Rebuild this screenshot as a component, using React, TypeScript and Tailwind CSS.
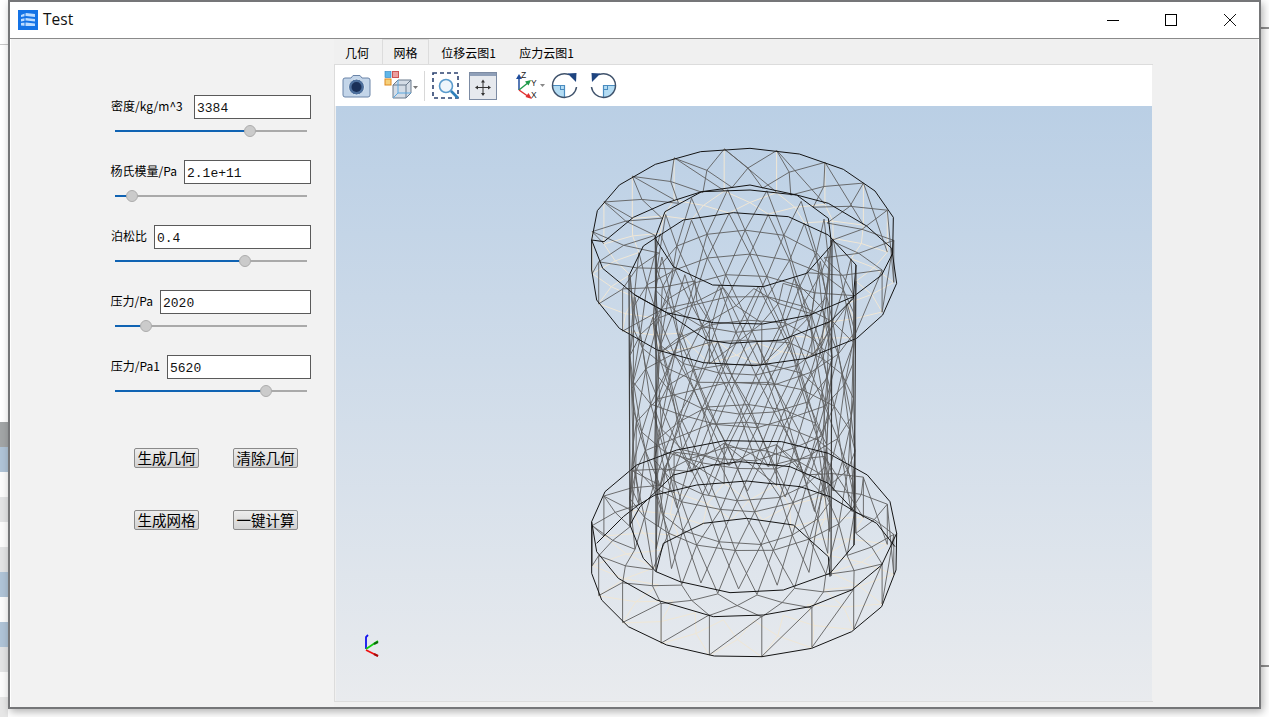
import React from "react";

type P = [number, number];
const CX = 743;
const hash = (a: number) => {
  const s = Math.sin(a * 12.9898) * 43758.5453;
  return s - Math.floor(s) - 0.5;
};
function ring(cy: number, rx: number, ry: number, n: number, phase: number, jit = 0, seed = 0): P[] {
  const out: P[] = [];
  for (let i = 0; i < n; i++) {
    const t = phase + (i * Math.PI * 2) / n;
    out.push([
      CX + rx * Math.cos(t) + jit * hash(seed + i * 1.7),
      cy + ry * Math.sin(t) + jit * hash(seed + i * 3.1 + 9),
    ]);
  }
  return out;
}
function band(a: P[], b: P[], dir = 1): [P, P][] {
  const n = a.length;
  const r: [P, P][] = [];
  for (let i = 0; i < n; i++) {
    const ib2 = (i + dir + n) % n;
    r.push([a[i], b[i]]);
    r.push([a[i], b[ib2]]);
  }
  return r;
}
function closed(a: P[]): [P, P][] {
  return a.map((p, i) => [p, a[(i + 1) % a.length]] as [P, P]);
}
function wall(y0: number, y1: number, rx: number, ry: number, n: number, rows: number, seed: number): [P, P][] {
  const res: [P, P][] = [];
  let prev = ring(y0, rx, ry, n, 0.05);
  for (let k = 1; k <= rows; k++) {
    const y = y0 + ((y1 - y0) * k) / rows;
    const cur = ring(y, rx, ry, n, 0.05 + (k % 2) * (Math.PI / n), k === rows ? 0 : 6, seed + k * 11);
    res.push(...band(prev, cur, k % 2 ? -1 : 1));
    if (k < rows) res.push(...closed(cur));
    prev = cur;
  }
  return res;
}
function annulus(cy0: number, cy1: number, r0: number, r1: number, n: number, seed: number): [P, P][] {
  const ry = 0.58;
  const rm = (r0 + r1) / 2;
  const a = ring(cy0, r0, r0 * ry, n, 0.05);
  const m = ring((cy0 + cy1) / 2, rm, rm * ry, n, 0.05 + Math.PI / n, 2, seed);
  const b = ring(cy1, r1, r1 * ry, n, 0.05);
  return [...band(a, m, -1), ...band(m, b, 1)];
}

const z3 = (pts: number[]): string => {
  const o: string[] = [];
  for (let i = 0; i < pts.length; i += 2) o.push(`${580 + pts[i] / 3},${140 + pts[i + 1] / 3}`);
  return o.join(" ");
};
const z4 = (pts: number[]): string => {
  const o: string[] = [];
  for (let i = 0; i < pts.length; i += 2) o.push(`${580 + pts[i] / 3},${400 + pts[i + 1] / 3}`);
  return o.join(" ");
};

const T1 = z3([52,212,118,135,226,73,362,35,510,25,658,42,790,88,885,153,940,232,938,340,905,405,820,470,690,525,548,552,400,548,260,518,165,465,68,385,35,300]);
const T2 = z3([72,305,160,232,255,190,365,155,510,135,650,165,745,190,860,258,935,325,950,430,908,525,830,595,680,655,525,677,370,668,232,630,118,565,50,480,35,390,35,300]);
const T3 = z3([225,295,255,215,365,155,510,150,650,165,745,235,755,315,680,400,550,440,398,435,280,380]);
const T4 = z3([148,405,190,318,225,295,310,240,460,218,625,230,745,285,828,375,820,475,750,545,605,600,450,610,380,600,260,518,165,465]);
const B1 = z4([35,365,75,275,170,195,290,150,435,122,605,125,745,160,862,225,930,305,950,400,905,495,815,570,690,620,550,645,400,650,230,600,115,535,50,455]);
const B2 = z4([35,365,35,520,65,600,145,680,260,735,403,768,546,770,695,745,815,695,905,620,948,510,950,400]);
const B2r = z4([50,430,130,350,175,315,225,285,350,255,500,243,660,260,750,290,825,335,890,370,945,440]);
const B3 = z4([150,375,180,320,280,225,400,195,480,185,630,200,745,250,825,335,822,435,750,520,610,570,450,578,300,545,228,515,190,475]);
const B4 = z4([228,515,250,430,370,370,500,355,640,375,745,470,750,530]);

const topWall = band(ring(278, 151, 88, 18, 0.05), ring(236, 151, 88, 18, 0.05), -1);
const isRearVertical = ([a, b]: [P, P]) => Math.abs(a[0] - b[0]) < 0.5 && b[1] < 236;

const cream: [P, P][] = [
  ...annulus(278, 278, 151, 113, 18, 3),
  ...annulus(570, 570, 151, 88, 18, 5),
  ...topWall.filter(isRearVertical),
];
const grey: [P, P][] = [
  ...annulus(236, 238, 151, 88, 18, 7),
  ...topWall.filter((s) => !isRearVertical(s)),
  ...annulus(530, 530, 151, 113, 18, 17),
  ...band(ring(570, 151, 87, 18, 0.05), ring(530, 151, 87, 18, 0.05), -1),
  ...wall(238, 540, 88, 49, 14, 7, 21),
  ...wall(278, 530, 113, 65, 18, 6, 41),
];

const seg = (l: [P, P][]) => l.map(([a, b]) => `M${a[0].toFixed(1)} ${a[1].toFixed(1)}L${b[0].toFixed(1)} ${b[1].toFixed(1)}`).join("");

function Mesh() {
  return (
    <svg viewBox="336 106 816 595" className="block w-full h-full" fill="none">
      <path d={seg(cream)} stroke="#f0e7d6" strokeWidth="1" />
      <path d={seg(grey)} stroke="#5f5f5f" strokeWidth="0.9" />
      <g stroke="#141414" strokeWidth="1">
        <polygon points={T1} />
        <polygon points={T2} />
        <polygon points={T3} />
        <polyline points={T4} />
        <polygon points={B1} />
        <polyline points={B2} />
        <polyline points={B2r} />
        <polygon points={B3} />
        <polyline points={B4} />
      </g>
      <g stroke="#3a3a3a" strokeWidth="1.2">
        <path d="M629 275L630 525M656 238L656 572M832 240L831 576M856 265L854 545" />
      </g>
      <g strokeWidth="1.8">
        <path d="M366 649V637L368 635" stroke="#1111ee" />
        <path d="M366 649L378 641" stroke="#11cc11" />
        <path d="M366 650L378 656" stroke="#ee1111" />
      </g>
      <path d="M374 644L378 642" stroke="#0a6a0a" strokeWidth="2" />
      <path d="M374 654L378 656" stroke="#aa0a0a" strokeWidth="2" />
    </svg>
  );
}

function Slider({ pos }: { pos: number }) {
  return (
    <div className="ml-[104px] w-[192px] h-[12px] mt-[6px] flex items-center">
      <div className="h-[2px] bg-[#1063b3]" style={{ width: pos }} />
      <div className="w-[12px] h-[12px] -mx-[6px] rounded-full bg-[#cbcbcb] border border-[#adadad] relative z-10 shrink-0" />
      <div className="h-[2px] bg-[#aaaaaa] flex-1" />
    </div>
  );
}

function Field({ label, value, w, pos }: { label: string; value: string; w: number; pos: number }) {
  return (
    <div className="h-[65px]">
      <div className="flex items-center justify-end h-[24px] pr-[23px] gap-[7px]">
        <span className="text-[12px] text-black leading-none flex-1 text-left pl-[100px] pb-[2px] whitespace-nowrap">{label}</span>
        <div
          className="h-[24px] bg-white border border-[#5a5a5a] pl-[2px] pt-[3px] flex items-center text-[13px] text-[#111] shrink-0"
          style={{ width: w, fontFamily: '"Liberation Mono", monospace' }}
        >
          {value}
        </div>
      </div>
      <Slider pos={pos} />
    </div>
  );
}

function Btn({ children }: { children: React.ReactNode }) {
  return (
    <button className="w-[65px] h-[20px] rounded-[2px] border border-[#8a8a8a] bg-gradient-to-b from-[#ededed] to-[#d2d2d2] text-[14.5px] leading-none text-black flex items-center justify-center p-0">
      {children}
    </button>
  );
}

function Camera() {
  return (
    <svg width="29" height="24" viewBox="0 0 29 24" className="shrink-0">
      <path d="M9 4L11 1.5H18L20 4H26Q28 4 28 6V21Q28 23 26 23H3Q1 23 1 21V6Q1 4 3 4Z" fill="#c3d5e9" stroke="#6a84a8" strokeWidth="1" />
      <circle cx="14.5" cy="13" r="8" fill="#4d6f9c" stroke="#dbe7f3" strokeWidth="1" />
      <circle cx="14.5" cy="13" r="5" fill="#1a3058" />
    </svg>
  );
}

function ViewCube() {
  return (
    <svg width="34" height="30" viewBox="0 0 34 30" className="shrink-0">
      <rect x="1" y="0.5" width="6" height="6" fill="#5fb6e8" stroke="#2880c0" strokeWidth="0.6" />
      <rect x="8.5" y="0.5" width="6" height="6" fill="#eb9f9f" stroke="#c55" strokeWidth="1" />
      <rect x="1" y="8" width="6" height="6" fill="#f6d07a" stroke="#de8a20" strokeWidth="1" />
      <path d="M9 14L14 9H27V22L22 27H9Z" fill="#d4dce6" stroke="#6b7a8c" strokeWidth="1" />
      <path d="M9 14H22V27M22 14L27 9" fill="none" stroke="#6b7a8c" strokeWidth="1" />
      <path d="M9 27L14 22H27M14 22V9" fill="none" stroke="#5aa8e0" strokeWidth="1" />
      <path d="M29 15H34L31.5 18Z" fill="#777" />
    </svg>
  );
}

function ZoomBox() {
  return (
    <svg width="28" height="28" viewBox="0 0 28 28" className="shrink-0">
      <rect x="1" y="1" width="25" height="25" fill="none" stroke="#2c4370" strokeWidth="1.6" strokeDasharray="4 3" />
      <circle cx="14" cy="14" r="6.5" fill="#eef5fb" stroke="#5a9bcc" strokeWidth="1.6" />
      <path d="M19 19L26 26" stroke="#2f7fba" strokeWidth="2.6" />
    </svg>
  );
}

function FitIcon() {
  return (
    <svg width="28" height="28" viewBox="0 0 28 28" className="shrink-0">
      <rect x="0.5" y="0.5" width="27" height="27" fill="#e6e9ee" stroke="#7c8ba3" />
      <rect x="1" y="1" width="26" height="3" fill="#8f9fb8" />
      <path d="M14 9V22M8 15.5H20" stroke="#333" strokeWidth="1" />
      <path d="M14 7.5L12 10.5H16ZM14 24L12 21H16ZM6 15.5L9 13.5V17.5ZM22 15.5L19 13.5V17.5Z" fill="#333" />
    </svg>
  );
}

function Triad() {
  return (
    <svg width="32" height="29" viewBox="0 0 32 29" className="shrink-0">
      <path d="M5 19V6" stroke="#1f4d9c" strokeWidth="1.5" />
      <path d="M5 3L2 8H8Z" fill="#1f4d9c" />
      <path d="M5 19L15 11" stroke="#1f9a4a" strokeWidth="1.5" />
      <path d="M17 9L11 10.5L14.5 14.5Z" fill="#1f9a4a" />
      <path d="M5 19L15 26" stroke="#e03030" strokeWidth="1.5" />
      <path d="M18 28L11.5 26L14.5 22Z" fill="#e03030" />
      <text x="7" y="7" fontSize="8.5" fill="#222" fontFamily="Liberation Sans">Z</text>
      <text x="17" y="15" fontSize="8.5" fill="#222" fontFamily="Liberation Sans">Y</text>
      <text x="17" y="27" fontSize="8.5" fill="#222" fontFamily="Liberation Sans">X</text>
      <path d="M26 13H31L28.5 16Z" fill="#888" />
    </svg>
  );
}

function Rot({ flip }: { flip?: boolean }) {
  return (
    <svg width="27" height="27" viewBox="0 0 27 27" className="shrink-0" style={flip ? { transform: "scaleX(-1)" } : undefined}>
      <path d="M1.5 13.5A12 12 0 0 0 13.5 25.5V13.5Z" fill="#b4dcf3" />
      <path d="M1.5 13.5H13.5V25.5" fill="none" stroke="#4a8cc0" strokeWidth="1.2" />
      <rect x="9.5" y="13.5" width="4" height="4" fill="none" stroke="#4a8cc0" strokeWidth="1" />
      <path d="M18 2.6A12 12 0 0 0 1.5 13.5A12 12 0 0 0 13.5 25.5A12 12 0 0 0 25.5 15" fill="none" stroke="#3f526b" strokeWidth="1.5" />
      <path d="M16.5 1.5L25.5 1L25 10Z" fill="#1f4480" />
    </svg>
  );
}

const stripe: [number, string][] = [
  [44, "#ffffff"], [1, "#c8c8c8"], [377, "#ffffff"], [25, "#a2a5a6"], [25, "#afc3d6"], [25, "#fbfbfb"],
  [25, "#e2e3e4"], [25, "#fbfbfb"], [25, "#e2e3e4"], [25, "#afc3d6"], [25, "#fbfbfb"], [25, "#afc3d6"],
  [25, "#e2e3e4"], [25, "#fbfbfb"], [20, "#e6e6e6"],
];

export default function App() {
  return (
    <div
      className="w-[1269px] h-[717px] overflow-hidden bg-white flex items-start"
      style={{ fontFamily: '"Noto Sans CJK SC", "Liberation Sans", sans-serif' }}
    >
      <div className="w-[8px] shrink-0 flex flex-col">
        {stripe.map(([h, c], i) => (
          <div key={i} style={{ height: h, background: c }} />
        ))}
      </div>
      <div className="w-[1253px] h-[709px] shrink-0 border-2 border-[#757678] bg-[#f0f0f0] flex flex-col shadow-[2px_3px_8px_rgba(0,0,0,0.3)] relative">
        <div className="h-[37px] shrink-0 bg-white border-b border-[#8a8a8a] flex items-center pl-[8px]">
          <svg width="20" height="20" viewBox="0 0 20 20" className="shrink-0">
            <rect width="20" height="20" fill="#1473e6" />
            <path d="M3 5L8 3L17 4V7L8 6L3 7ZM3 9L8 8L17 9V11.5L8 10.5L3 11.5ZM3 13L8 12.5L17 13.5V16L8 16L3 15.5Z" fill="#bcdcff" />
            <path d="M7 3V16" stroke="#1473e6" />
          </svg>
          <span className="ml-[5px] mb-[1px] text-[15.5px] text-[#111]" style={{ fontFamily: '"Open Sans", sans-serif' }}>Test</span>
          <div className="ml-auto flex items-center h-full">
            <div className="w-[58px] flex justify-center">
              <div className="w-[12px] h-px bg-black" />
            </div>
            <div className="w-[58px] flex justify-center">
              <div className="w-[12px] h-[12px] border border-black" />
            </div>
            <div className="w-[58px] ml-[1px] flex justify-center">
              <svg width="14" height="14" viewBox="0 0 14 14">
                <path d="M1 1L13 13M13 1L1 13" stroke="#111" strokeWidth="1" />
              </svg>
            </div>
          </div>
        </div>
        <div className="flex-1 flex min-h-0 border-l border-r border-white">
          <div className="w-[323px] shrink-0 pt-[56px] flex flex-col bg-[#f2f2f2]">
            <Field label="密度/kg/m^3" value="3384" w={117} pos={135} />
            <Field label="杨氏模量/Pa" value="2.1e+11" w={127} pos={17} />
            <Field label="泊松比" value="0.4" w={157} pos={130} />
            <Field label="压力/Pa" value="2020" w={151} pos={31} />
            <Field label="压力/Pa1" value="5620" w={144} pos={151} />
            <div className="mt-[28px] ml-[123px] grid grid-cols-[65px_65px] gap-x-[34px] gap-y-[42px] w-fit">
              <Btn>生成几何</Btn>
              <Btn>清除几何</Btn>
              <Btn>生成网格</Btn>
              <Btn>一键计算</Btn>
            </div>
          </div>
          <div className="w-[819px] shrink-0 flex flex-col pb-[5px]">
            <div className="h-[25px] shrink-0 flex items-end text-[12px] text-black pl-[11px]">
              <div className="w-[24px] h-[25px] pt-[2px] flex items-center justify-center">几何</div>
              <div className="ml-[13px] w-[47px] h-[25px] pt-[2px] flex items-center justify-center bg-[#f0f0f0] border border-b-0 border-[#dcdcdc]">网格</div>
              <div className="ml-[13px] w-[53px] h-[25px] pt-[2px] flex items-center justify-center whitespace-nowrap">位移云图1</div>
              <div className="ml-[25px] w-[53px] h-[25px] pt-[2px] flex items-center justify-center whitespace-nowrap">应力云图1</div>
            </div>
            <div className="flex-1 flex flex-col min-h-0 border-l border-t border-b border-[#dcdcdc] pr-[1px]">
              <div className="h-[41px] shrink-0 bg-white flex items-center pl-[7px] w-[817px]">
                <Camera />
                <div className="ml-[13px]"><ViewCube /></div>
                <div className="ml-[6px] w-px h-[30px] bg-[#d8d8d8]" />
                <div className="ml-[7px]"><ZoomBox /></div>
                <div className="ml-[9px]"><FitIcon /></div>
                <div className="ml-[17px]"><Triad /></div>
                <div className="ml-[5px]"><Rot /></div>
                <div className="ml-[12px]"><Rot flip /></div>
              </div>
              <div className="flex-1 min-h-0 ml-px w-[816px] bg-gradient-to-b from-[#bacfe5] to-[#e9ebee]">
                <Mesh />
              </div>
            </div>
          </div>
        </div>
      </div>
      <div className="flex-1 flex flex-col">
        <div className="h-[27px]" />
        <div className="h-[2px] bg-[#909090]" />
        <div className="h-[636px]" />
        <div className="h-[2px] bg-[#909090]" />
      </div>
    </div>
  );
}
